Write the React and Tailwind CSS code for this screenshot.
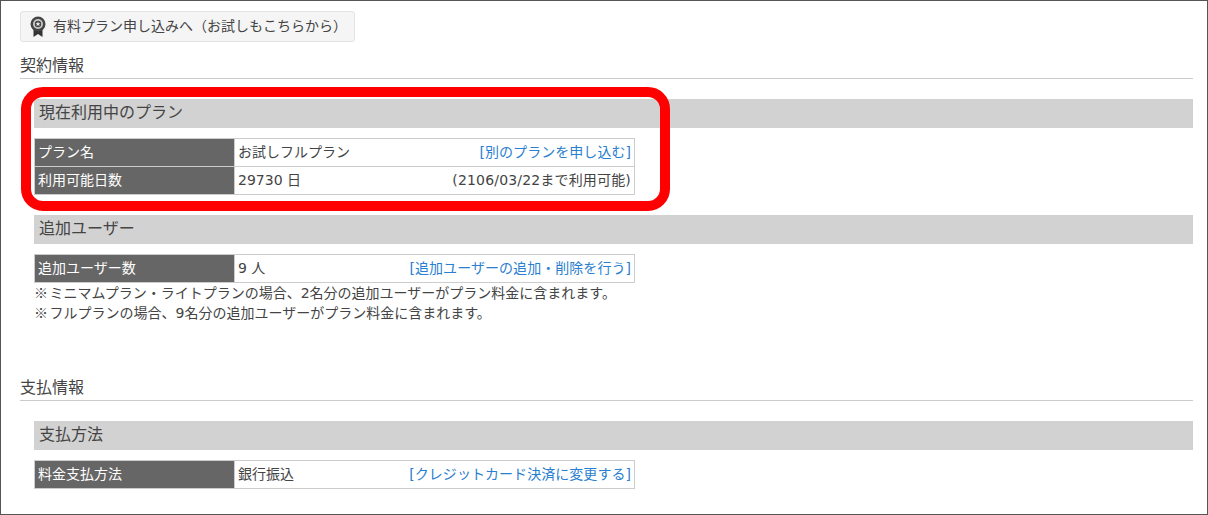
const font = "[font-family:'DejaVu_Sans','Noto_Sans_CJK_JP',sans-serif]";

function Row({ label, value, right, link }) {
  return (
    <div className="flex h-[28px] border-b border-[#cccccc]">
      <div className="w-[199px] shrink-0 bg-[#666666] text-white pl-[3px] pb-[1px] flex items-center text-[14px]">{label}</div>
      <div className="flex-1 flex items-center justify-between pl-[3px] pr-[3px] pb-[1px] text-[14px] border-l border-[#cccccc]">
        <span>{value}</span>
        <span className={link ? "text-[#2a80d0] tracking-[0.05px]" : "tracking-[0.17px]"}>{right}</span>
      </div>
    </div>
  );
}

function Table({ children }) {
  return (
    <div className="w-[601px] mt-[10px] border border-[#cccccc] border-b-0">{children}</div>
  );
}

function Bar({ children }) {
  return (
    <div className="h-[29px] bg-[#d2d2d2] pl-[5px] pb-[2px] flex items-center text-[16px] text-[#444444]">{children}</div>
  );
}

function Heading({ children, className }) {
  return (
    <div className={"h-[20px] flex items-center text-[16px] text-[#444444] " + className}>{children}</div>
  );
}

function Line({ className }) {
  return <div className={"h-px bg-[#cccccc] " + className} />;
}

function Award() {
  return (
    <svg width="16" height="22" viewBox="0 0 16 22" className="shrink-0">
      <path d="M3.5 12 L3.5 21 L8 18 L12.5 21 L12.5 12 Z" fill="#333333" />
      <circle cx="8" cy="8" r="7.5" fill="#444444" />
      <circle cx="8" cy="8" r="5" fill="#c8c8c8" />
      <circle cx="8" cy="8" r="3.2" fill="#444444" />
      <path d="M8 5.6 L8.7 7.3 L10.4 7.3 L9 8.4 L9.6 10.2 L8 9.1 L6.4 10.2 L7 8.4 L5.6 7.3 L7.3 7.3 Z" fill="#eeeeee" />
    </svg>
  );
}

function Note({ children }) {
  return (
    <p>
      <span className="[font-family:'Noto_Sans_CJK_JP',sans-serif] leading-none mr-[1.5px]">※</span>
      {children}
    </p>
  );
}

export default function App() {
  return (
    <div className={"relative w-[1208px] h-[515px] bg-white border border-[#555555] pl-[19px] pr-[14px] pt-[10px] text-[#444444] overflow-hidden " + font}>
      <div className="w-[335px] h-[31px] bg-[#f5f5f5] border border-[#e3e3e3] rounded-[3px] flex items-center pl-[9px] gap-[7px] text-[14px] text-[#444444]">
        <Award />
        <span>有料プラン申し込みへ（お試しもこちらから）</span>
      </div>

      <Heading className="mt-[14px]">契約情報</Heading>
      <Line className="mt-[2px] mb-[20px]" />

      <div className="ml-[14px]">
        <Bar>現在利用中のプラン</Bar>
        <Table>
          <Row label="プラン名" value="お試しフルプラン" right="[別のプランを申し込む]" link />
          <Row label="利用可能日数" value="29730 日" right="(2106/03/22まで利用可能)" />
        </Table>

        <div className="mt-[20px]">
          <Bar>追加ユーザー</Bar>
        </div>
        <Table>
          <Row label="追加ユーザー数" value="9 人" right="[追加ユーザーの追加・削除を行う]" link />
        </Table>
        <div className="text-[14px] leading-[20px]">
          <Note>ミニマムプラン・ライトプランの場合、2名分の追加ユーザーがプラン料金に含まれます。</Note>
          <Note>フルプランの場合、9名分の追加ユーザーがプラン料金に含まれます。</Note>
        </div>
      </div>

      <Heading className="mt-[55px]">支払情報</Heading>
      <Line className="mt-[2px] mb-[20px]" />

      <div className="ml-[14px]">
        <Bar>支払方法</Bar>
        <Table>
          <Row label="料金支払方法" value="銀行振込" right="[クレジットカード決済に変更する]" link />
        </Table>
      </div>

      <div className="absolute left-[20px] top-[86px] w-[649px] h-[124px] border-[10px] border-[#ff0000] rounded-[22px]" />
    </div>
  );
}
